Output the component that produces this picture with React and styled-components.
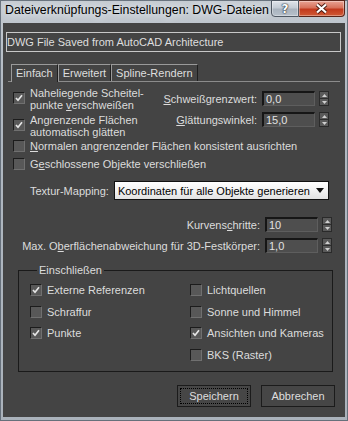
import React from "react";
import styled, { createGlobalStyle } from "styled-components";

const GlobalStyle = createGlobalStyle`
  body {
    margin: 0;
    background: #ffffff;
  }
  * {
    box-sizing: border-box;
  }
`;

const Window = styled.div`
  width: 348px;
  height: 421px;
  display: flex;
  flex-direction: column;
  padding: 0 2px 3px 2px;
  border: 1px solid #66707b;
  background: linear-gradient(180deg, #c4cad1 0%, #b1b9c2 20%, #aab2bb 100%);
  font-family: "Liberation Sans", Arial, sans-serif;
`;

const TitleBar = styled.div`
  height: 22px;
  display: flex;
  justify-content: space-between;
  align-items: flex-start;
`;

const TitleText = styled.div`
  margin-top: 2px;
  padding-left: 2px;
  font-size: 12.3px;
  line-height: 15px;
  color: #000;
  text-shadow: 0 0 6px #e8ecf0, 0 0 10px #e8ecf0;
  white-space: nowrap;
`;

const Controls = styled.div`
  display: flex;
  margin-top: -1px;
`;

const CaptionButton = styled.div`
  height: 17px;
  width: ${(p) => p.$w}px;
  display: flex;
  align-items: center;
  justify-content: center;
  border: 1px solid ${(p) => (p.$close ? "#5a2419" : "#4f5863")};
  border-left-width: ${(p) => (p.$close ? 0 : 1)}px;
  border-radius: ${(p) => (p.$close ? "0 0 4px 0" : "0 0 0 4px")};
  background: ${(p) =>
    p.$close
      ? "linear-gradient(180deg, #e9a394 0%, #d7715b 45%, #c2391d 55%, #d05a36 100%)"
      : "linear-gradient(180deg, #dfe4ea 0%, #c4ccd5 45%, #a9b3be 55%, #b7c0ca 100%)"};
  box-shadow: inset 0 0 0 1px rgba(255, 255, 255, 0.35);
`;

const HelpGlyph = styled.span`
  font-family: "DejaVu Sans", sans-serif;
  font-weight: bold;
  font-size: 12px;
  line-height: 12px;
  color: #fff;
  text-shadow: 0 0 1px #2c333b, 0 0 1px #2c333b, 0 0 2px #2c333b;
`;

const Content = styled.div`
  flex: 1;
  display: flex;
  flex-direction: column;
  background: #444444;
  color: #dcdcdc;
  font-size: 11px;
  line-height: 12px;
`;

const PathField = styled.div`
  margin: 9px 4px 0 3px;
  height: 20px;
  border: 1px solid #c8c8c8;
  line-height: 18px;
  color: #dedede;
`;

const TabStrip = styled.div`
  display: flex;
  align-items: flex-end;
  margin: 11px 0 0 8px;
  height: 18px;
`;

const Tab = styled.div`
  height: ${(p) => (p.$active ? 18 : 17)}px;
  padding: 0 4px;
  line-height: ${(p) => (p.$active ? 17 : 16)}px;
  border: 1px solid;
  border-color: #9a9a9a #1f1f1f transparent #9a9a9a;
  border-bottom: none;
  background: #444444;
  margin-bottom: ${(p) => (p.$active ? -1 : 0)}px;
  position: relative;
  z-index: ${(p) => (p.$active ? 1 : 0)};
  color: #dedede;
`;

const Pane = styled.div`
  margin: 0 5px;
  border-top: 1px solid #8c8c8c;
  padding-top: 5px;
  display: flex;
  flex-direction: column;
`;

const TopGrid = styled.div`
  display: grid;
  grid-template-columns: auto auto;
  justify-content: space-between;
  padding: 0 11px 0 5px;
`;

const Column = styled.div`
  display: flex;
  flex-direction: column;
  gap: ${(p) => p.$gap}px;
  padding-top: ${(p) => p.$top || 0}px;
`;

const CheckItem = styled.label`
  display: flex;
  align-items: ${(p) => (p.$multi ? "flex-start" : "center")};
  gap: 5px;
  margin: ${(p) => p.$m || "0"};
  white-space: nowrap;
`;

const Box = styled.span`
  flex: none;
  width: 12px;
  height: 12px;
  margin-top: ${(p) => (p.$multi ? 5 : 0)}px;
  border: 1px solid;
  border-color: #1c1c1c #707070 #707070 #1c1c1c;
  background: #585858;
  display: flex;
  align-items: center;
  justify-content: center;
`;

const FieldRow = styled.div`
  display: flex;
  align-items: center;
  justify-content: flex-end;
  gap: 5px;
  height: 15px;
  margin: ${(p) => p.$m || "0"};
  padding-right: ${(p) => p.$pr || 0}px;
  white-space: nowrap;
`;

const NumBox = styled.div`
  width: 53px;
  height: 15px;
  border-style: solid;
  border-width: 2px 1px 1px 2px;
  border-color: #161616 #5e5e5e #5e5e5e #161616;
  background: #4e4e4e;
  padding-left: 2px;
  line-height: 12px;
  color: #e2e2e2;
`;

const Spinner = styled.div`
  width: 10px;
  height: 15px;
  margin-left: -1px;
  display: flex;
  flex-direction: column;
  border: 1px solid #2a2a2a;
  background: #5a5a5a;
`;

const SpinHalf = styled.div`
  flex: 1;
  display: flex;
  align-items: center;
  justify-content: center;
  border-top: ${(p) => (p.$down ? "1px solid #2e2e2e" : "none")};
`;

const MappingRow = styled.div`
  display: flex;
  align-items: center;
  gap: 5px;
  margin-top: 11px;
  padding-left: 22px;
  white-space: nowrap;
`;

const Select = styled.div`
  flex: none;
  width: 215px;
  height: 19px;
  display: flex;
  align-items: center;
  justify-content: space-between;
  padding: 0 4px 0 3px;
  overflow: hidden;
  border: 1px solid #111;
  background: linear-gradient(180deg, #ffffff 0%, #f2f2f2 50%, #e2e2e2 100%);
  color: #000;
  font-size: 11px;
`;

const Group = styled.fieldset`
  margin: 11px 7px 0 10px;
  padding: 8px 0 10px 11px;
  border: 1px solid #1a1a1a;
  min-width: 0;
`;

const Legend = styled.legend`
  margin-left: 7px;
  padding: 0 2px;
  line-height: 12px;
  color: #dcdcdc;
`;

const GroupGrid = styled.div`
  display: grid;
  grid-template-columns: 160px 1fr;
  row-gap: 9.5px;
`;

const ButtonRow = styled.div`
  display: flex;
  justify-content: flex-end;
  gap: 10px;
  margin-top: 13px;
  padding-right: 10px;
`;

const Button = styled.div`
  width: 74px;
  height: 22px;
  display: flex;
  align-items: center;
  justify-content: center;
  border: 1px solid #1b1b1b;
  background: #464646;
  color: #dedede;
  outline: ${(p) => (p.$focus ? "1px dotted #000" : "none")};
  outline-offset: -4px;
`;

const Check = () => (
  <svg width="8" height="8" viewBox="0 0 8 8">
    <path d="M1 4 L3 6.2 L7 1.3" fill="none" stroke="#e6e6e6" strokeWidth="1.7" />
  </svg>
);

const CheckBox = ({ checked, multi }) => (
  <Box $multi={multi}>{checked && <Check />}</Box>
);

const Arrow = ({ down }) => (
  <svg width="5" height="3" viewBox="0 0 5 3">
    <path d={down ? "M0 0 L5 0 L2.5 3 Z" : "M0 3 L5 3 L2.5 0 Z"} fill="#d0d0d0" />
  </svg>
);

const NumField = ({ label, value, m, pr }) => (
  <FieldRow $m={m} $pr={pr}>
    <span>{label}</span>
    <NumBox>{value}</NumBox>
    <Spinner>
      <SpinHalf>
        <Arrow />
      </SpinHalf>
      <SpinHalf $down>
        <Arrow down />
      </SpinHalf>
    </Spinner>
  </FieldRow>
);

const includes = [
  { label: "Externe Referenzen", checked: true },
  { label: "Lichtquellen" },
  { label: "Schraffur" },
  { label: "Sonne und Himmel" },
  { label: "Punkte", checked: true },
  { label: "Ansichten und Kameras", checked: true },
  null,
  { label: "BKS (Raster)" },
];

export default function App() {
  return (
    <>
      <GlobalStyle />
      <Window>
        <TitleBar>
          <TitleText>Dateiverknüpfungs-Einstellungen: DWG-Dateien</TitleText>
          <Controls>
            <CaptionButton $w={28}>
              <HelpGlyph>?</HelpGlyph>
            </CaptionButton>
            <CaptionButton $w={46} $close>
              <svg width="13" height="11" viewBox="0 0 13 11">
                <path d="M2 1.5 L11 9.5 M11 1.5 L2 9.5" stroke="#4a1b12" strokeWidth="4" />
                <path d="M2 1.5 L11 9.5 M11 1.5 L2 9.5" stroke="#fff" strokeWidth="2.2" />
              </svg>
            </CaptionButton>
          </Controls>
        </TitleBar>
        <Content>
          <PathField>DWG File Saved from AutoCAD Architecture</PathField>
          <TabStrip>
            <Tab $active>Einfach</Tab>
            <Tab>Erweitert</Tab>
            <Tab>Spline-Rendern</Tab>
          </TabStrip>
          <Pane>
            <TopGrid>
              <Column $gap={3}>
                <CheckItem $multi>
                  <CheckBox checked multi />
                  <span>
                    Naheliegende Scheitel-
                    <br />
                    punkte <u>v</u>erschweißen
                  </span>
                </CheckItem>
                <CheckItem $multi>
                  <CheckBox checked multi />
                  <span>
                    Angrenzende Flächen
                    <br />
                    automatisch glätten
                  </span>
                </CheckItem>
              </Column>
              <Column $gap={6} $top={4}>
                <NumField
                  label={
                    <>
                      <u>S</u>chweißgrenzwert:
                    </>
                  }
                  value="0,0"
                />
                <NumField
                  label={
                    <>
                      <u>G</u>lättungswinkel:
                    </>
                  }
                  value="15,0"
                />
              </Column>
            </TopGrid>
            <CheckItem $m="2px 0 0 5px">
              <CheckBox />
              <span>
                <u>N</u>ormalen angrenzender Flächen konsistent ausrichten
              </span>
            </CheckItem>
            <CheckItem $m="6px 0 0 5px">
              <CheckBox />
              <span>
                G<u>e</u>schlossene Objekte verschließen
              </span>
            </CheckItem>
            <MappingRow>
              <span>Textur-Mapping:</span>
              <Select>
                <span>Koordinaten für alle Objekte generieren</span>
                <svg width="8" height="5" viewBox="0 0 8 5">
                  <path d="M0 0 L8 0 L4 5 Z" fill="#111" />
                </svg>
              </Select>
            </MappingRow>
            <NumField
              m="17px 0 0 0"
              pr={8}
              label={
                <>
                  Kurvens<u>c</u>hritte:
                </>
              }
              value="10"
            />
            <NumField
              m="6px 0 0 0"
              pr={8}
              label={
                <>
                  Max. O<u>b</u>erflächenabweichung für 3D-Festkörper:
                </>
              }
              value="1,0"
            />
            <Group>
              <Legend>Einschließen</Legend>
              <GroupGrid>
                {includes.map((it, i) =>
                  it ? (
                    <CheckItem key={i}>
                      <CheckBox checked={it.checked} />
                      <span>{it.label}</span>
                    </CheckItem>
                  ) : (
                    <span key={i} />
                  )
                )}
              </GroupGrid>
            </Group>
          </Pane>
          <ButtonRow>
            <Button $focus>Speichern</Button>
            <Button>Abbrechen</Button>
          </ButtonRow>
        </Content>
      </Window>
    </>
  );
}
